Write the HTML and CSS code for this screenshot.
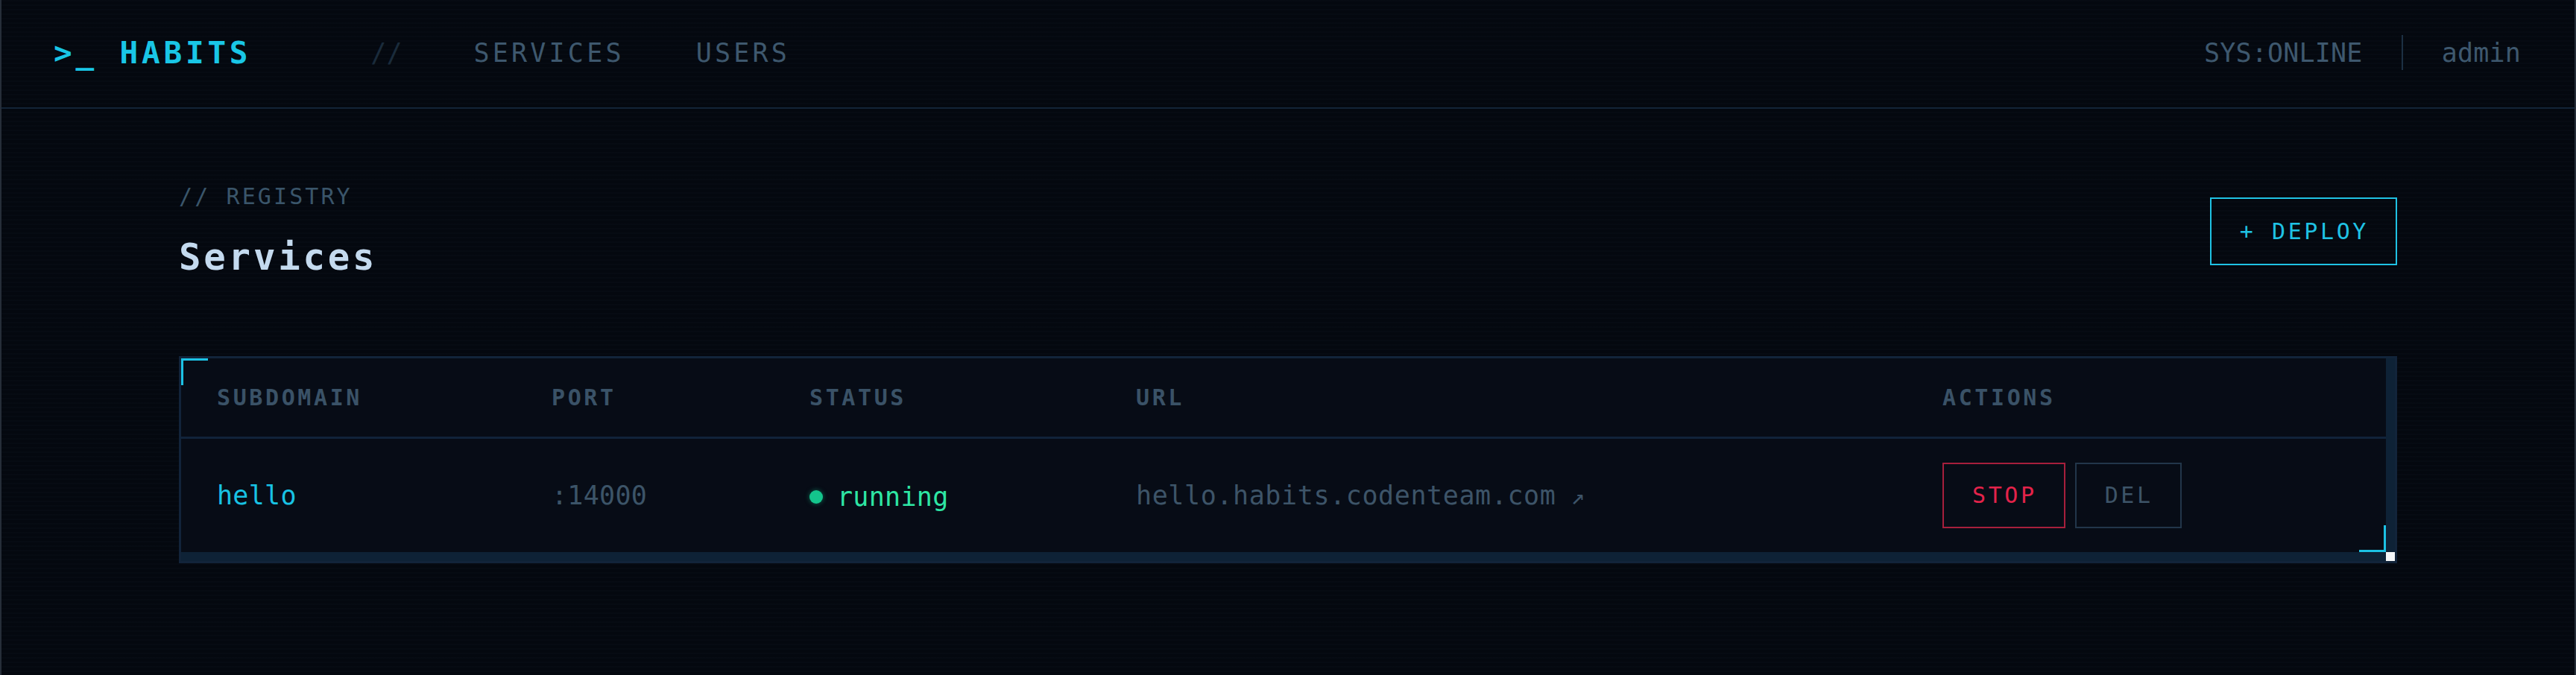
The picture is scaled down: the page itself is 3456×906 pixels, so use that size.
FILE: index.html
```html
<!DOCTYPE html>
<html lang="en">
<head>
<meta charset="utf-8">
<title>HABITS — Services</title>
<link rel="stylesheet" href="styles.css">
</head>
<body>
<div class="app">
  <header class="topbar">
    <div class="logo">&gt;_ HABITS</div>
    <nav class="nav">
      <span class="nav-sep">//</span>
      <a class="nav-link">SERVICES</a>
      <a class="nav-link">USERS</a>
    </nav>
    <div class="status">
      <span class="status-text">SYS:ONLINE</span>
      <span class="divider"></span>
      <span class="status-text">admin</span>
    </div>
  </header>

  <main class="main">
    <div class="page-head">
      <div class="page-title">
        <div class="eyebrow">// REGISTRY</div>
        <h1 class="title">Services</h1>
      </div>
      <button class="btn btn-deploy">+ DEPLOY</button>
    </div>

    <div class="table-frame">
      <div class="table-scroll">
        <table class="grid">
          <colgroup>
            <col class="c-sub"><col class="c-port"><col class="c-status"><col class="c-url"><col class="c-actions">
          </colgroup>
          <thead>
            <tr>
              <th>SUBDOMAIN</th>
              <th>PORT</th>
              <th>STATUS</th>
              <th>URL</th>
              <th>ACTIONS</th>
            </tr>
          </thead>
          <tbody>
            <tr>
              <td class="sub">hello</td>
              <td class="port">:14000</td>
              <td><span class="state"><span class="dot"></span>running</span></td>
              <td class="url">hello.habits.codenteam.com<span class="ext">↗</span></td>
              <td>
                <div class="actions">
                  <button class="btn btn-stop">STOP</button>
                  <button class="btn btn-del">DEL</button>
                </div>
              </td>
            </tr>
          </tbody>
        </table>
      </div>
    </div>
  </main>
</div>
</body>
</html>
```

FILE: styles.css
```css
* { box-sizing: border-box; }

html, body {
  margin: 0;
  padding: 0;
  background: #04080f;
}

body {
  font-family: "DejaVu Sans Mono", "Liberation Mono", monospace;
  color: #3d566b;
}

.app {
  min-height: 100vh;
  border-left: 2px solid #262e39;
  border-right: 2px solid #262e39;
  background-color: #04080f;
  background-image: repeating-linear-gradient(to bottom, rgba(120, 160, 200, 0.018) 0 2px, transparent 2px 6px);
}

/* ---------- top bar ---------- */
.topbar {
  height: 146px;
  display: flex;
  align-items: center;
  padding: 0 72px 3px 70px;
  border-bottom: 2px solid #132437;
}

.logo {
  font-size: 41px;
  font-weight: bold;
  letter-spacing: 4.8px;
  color: #19c6e6;
}

.nav {
  display: flex;
  align-items: center;
  gap: 96px;
  margin-left: 160px;
  font-size: 35px;
}

.nav-sep {
  color: #1a2b3b;
}

.nav-link {
  color: #3e586e;
  letter-spacing: 4.2px;
  text-decoration: none;
}

.status {
  margin-left: auto;
  display: flex;
  align-items: center;
  gap: 52px;
  font-size: 35px;
}

.status-text {
  color: #3e586e;
  letter-spacing: 0.2px;
}

.divider {
  width: 2px;
  height: 47px;
  background: #1c3043;
}

/* ---------- main ---------- */
.main {
  padding: 100px 238px 0 238px;
}

.page-head {
  display: flex;
  justify-content: space-between;
  align-items: center;
  margin-bottom: 103px;
}

.eyebrow {
  font-size: 30px;
  line-height: 36px;
  letter-spacing: 3.1px;
  color: #3a556a;
  margin-bottom: 35px;
}

.title {
  margin: 0;
  font-size: 49px;
  line-height: 58px;
  font-weight: bold;
  letter-spacing: 3.8px;
  color: #c4daef;
}

.btn {
  font-family: "DejaVu Sans Mono", "Liberation Mono", monospace;
  font-size: 30px;
  line-height: 34px;
  letter-spacing: 3.6px;
  background: transparent;
  border: 2px solid;
  padding: 25px 36px 25px 38px;
  cursor: pointer;
}

.btn-deploy {
  color: #1fc2e4;
  border-color: #1fc2e4;
  padding-top: 27px;
  padding-bottom: 26px;
}

/* ---------- table ---------- */
.table-frame {
  position: relative;
  border: 3px solid #12243a;
  background: #0e2236;
  padding: 0 12px 12px 0;
}

.table-frame::after {
  content: "";
  position: absolute;
  right: 0;
  bottom: 0;
  width: 12px;
  height: 12px;
  background: #f4f6f8;
}

.table-scroll {
  position: relative;
  overflow: auto;
  background: #070c16;
}

.table-scroll::before,
.table-scroll::after {
  content: "";
  position: absolute;
  width: 33px;
  height: 33px;
  pointer-events: none;
}

.table-scroll::before {
  top: 0;
  left: 0;
  border-top: 3px solid #1cc2e4;
  border-left: 3px solid #1cc2e4;
}

.table-scroll::after {
  bottom: 0;
  right: 0;
  border-bottom: 3px solid #1cc2e4;
  border-right: 3px solid #1cc2e4;
}

.grid {
  width: 100%;
  border-collapse: collapse;
  table-layout: fixed;
}

.c-sub { width: 449px; }
.c-port { width: 346px; }
.c-status { width: 438px; }
.c-url { width: 1082px; }

.grid th {
  text-align: left;
  padding: 36px 48px;
  font-size: 30px;
  line-height: 33px;
  font-weight: bold;
  letter-spacing: 3.6px;
  color: #3a5267;
  border-bottom: 3px solid #11233a;
}

.grid td {
  padding: 32px 48px;
  font-size: 35px;
  line-height: 42px;
  letter-spacing: 0.3px;
  vertical-align: middle;
  white-space: nowrap;
}

.sub { color: #18c2e4; }
.port { color: #3c5468; }

.state {
  display: inline-flex;
  align-items: center;
  gap: 19px;
  color: #2ee6a4;
}

.dot {
  width: 18px;
  height: 18px;
  border-radius: 50%;
  background: #14c58c;
  box-shadow: 0 0 6px rgba(20, 197, 140, 0.5);
}

.grid td.url {
  color: #3d5468;
  letter-spacing: 0.6px;
}

.ext {
  font-size: 31px;
  margin-left: 20px;
  color: #3d5468;
}

.actions {
  display: flex;
  gap: 13px;
}

.btn-stop {
  color: #e3234a;
  border-color: #a61f3c;
}

.btn-del {
  color: #3d5468;
  border-color: #22364a;
}
```
